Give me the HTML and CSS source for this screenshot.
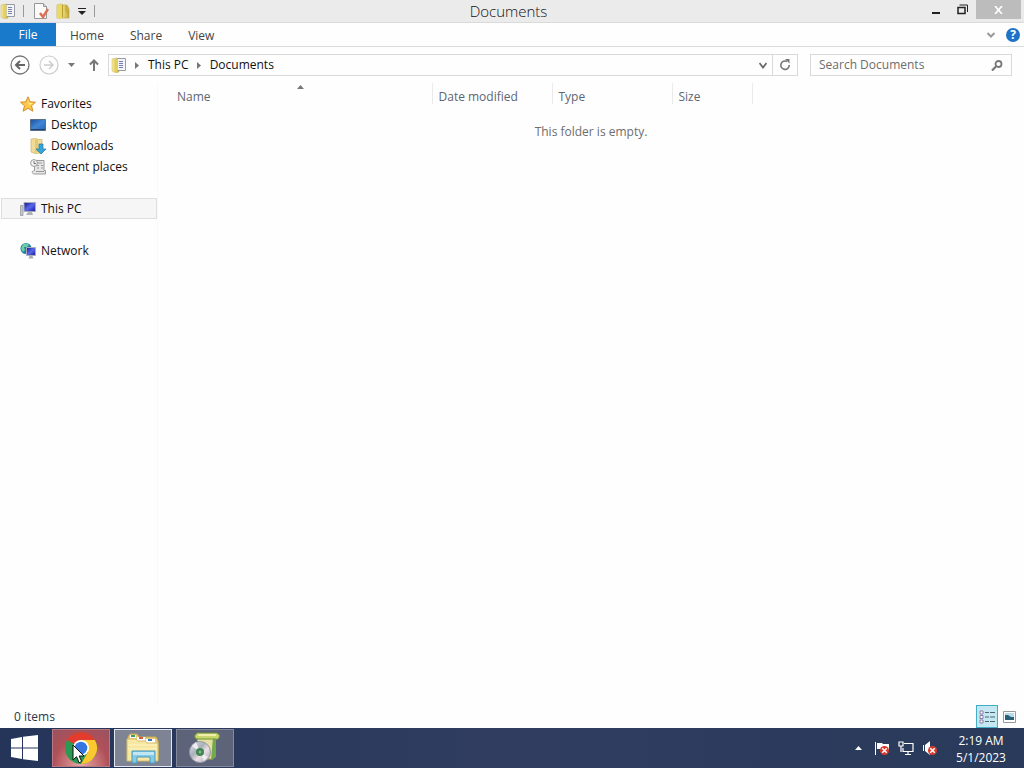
FILE: index.html
```html
<!DOCTYPE html>
<html lang="en">
<head>
  <meta charset="UTF-8" />
  <title>Documents</title>
  <link rel="stylesheet" href="styles.css">
</head>
<body>
  <!-- shared icons -->
  <svg class="defs" aria-hidden="true">
    <defs>
      <linearGradient id="gold" x2="1"><stop offset="0" stop-color="#f4eaa0" /><stop offset=".6" stop-color="#e4d067" /><stop offset="1" stop-color="#bda640" /></linearGradient>
      <linearGradient id="screen" x2="1" y2="1"><stop offset="0" stop-color="#1b4f9e" /><stop offset=".5" stop-color="#3f86d4" /><stop offset="1" stop-color="#2a64b4" /></linearGradient>
      <linearGradient id="monitor" x2="1" y2="1"><stop offset="0" stop-color="#11128c" /><stop offset=".5" stop-color="#5b68e8" /><stop offset="1" stop-color="#1517a0" /></linearGradient>
      <linearGradient id="disc" x2="1" y2="1"><stop offset="0" stop-color="#e8e8ee" /><stop offset=".4" stop-color="#a9b0b8" /><stop offset=".6" stop-color="#ecdfe6" /><stop offset="1" stop-color="#a2a6b0" /></linearGradient>
      <symbol id="docs" viewBox="0 0 16 16">
        <path d="M1 2l5-1 2 1v13l-3 1-4-2z" fill="url(#gold)" stroke="#c9b65a" stroke-width=".5" />
        <path d="M6 1.500h8.500v12H6z" fill="#f3f4f7" stroke="#9b9ca3" />
        <path d="M8 4.500h4M8 6.500h4M8 8.500h4M8 10.500h4" stroke="#7581b3" />
        <path d="M3.500 2.500l3-1v13l-3 1z" fill="#e2cf5e" />
      </symbol>
      <symbol id="badge" viewBox="0 0 8 8">
        <circle cx="4" cy="4" r="4" fill="#d83a2c" />
        <path d="M2 2l4 4M6 2L2 6" stroke="#fff" stroke-width="1.300" />
      </symbol>
    </defs>
  </svg>

  <div class="window">
    <header class="titlebar">
      <div class="quick-access">
        <svg width="16" height="16"><use href="#docs" /></svg>
        <span class="divider"></span>
        <button class="tool" aria-label="Properties">
          <svg width="16" height="16" viewBox="0 0 16 16"><path d="M1.500.5h9l3 3v12h-12z" fill="#fafafa" stroke="#96979b" /><path d="M10.500.5v3h3" fill="#ddd" stroke="#96979b" /><path d="M7 10l3 4 5-8" fill="none" stroke="#dc7155" stroke-width="2.500" /></svg>
        </button>
        <button class="tool" aria-label="New folder">
          <svg width="16" height="16" viewBox="0 0 16 16"><path d="M2 2l4-1 2 1h4l2 4v9H2z" fill="url(#gold)" stroke="#c2aa40" stroke-width=".7" /><path d="M2 2l4-1 1 1v12l-2 2-3-1z" fill="#e9d969" /><path d="M7.500 2v12M11 3v5l3 2" stroke="#b79e32" fill="none" /></svg>
        </button>
        <button class="tool small" aria-label="Customize Quick Access Toolbar">
          <svg width="8" height="7" viewBox="0 0 8 7"><path d="M0 .5h8" stroke="#222" /><path d="M0 3h8L4 7z" fill="#222" /></svg>
        </button>
        <span class="divider"></span>
      </div>
      <h1 class="title">Documents</h1>
      <div class="window-buttons">
        <button aria-label="Minimize"><svg width="8" height="10" viewBox="0 0 8 10"><path d="M0 7h8v2H0z" fill="#222" /></svg></button>
        <button aria-label="Restore"><svg width="11" height="11" viewBox="0 0 11 11"><path d="M1 3.500h7v6H1z" fill="none" stroke="#222" stroke-width="1.500" /><path d="M2.500 1h8v7" fill="none" stroke="#222" /></svg></button>
        <button class="close" aria-label="Close"><svg width="9" height="8" viewBox="0 0 9 8"><path d="M1 0l7 8M8 0L1 8" stroke="#fff" stroke-width="1.700" /></svg></button>
      </div>
    </header>

    <nav class="ribbon">
      <button class="tab file">File</button>
      <button class="tab">Home</button>
      <button class="tab">Share</button>
      <button class="tab">View</button>
      <div class="ribbon-end">
        <button class="tool" aria-label="Expand the Ribbon"><svg width="8" height="6" viewBox="0 0 8 6"><path d="M.5 1L4 4.500 7.500 1" fill="none" stroke="#999" stroke-width="2" /></svg></button>
        <button class="tool help" aria-label="Help">?</button>
      </div>
    </nav>

    <div class="navbar">
      <div class="history">
        <button class="tool" aria-label="Back"><svg width="20" height="20" viewBox="0 0 20 20"><circle cx="10" cy="10" r="9" fill="none" stroke="#777" stroke-width="1.300" /><path d="M15 10H6M10 6l-4 4 4 4" fill="none" stroke="#666" stroke-width="2" /></svg></button>
        <button class="tool" aria-label="Forward"><svg width="20" height="20" viewBox="0 0 20 20"><circle cx="10" cy="10" r="9" fill="none" stroke="#ccc" stroke-width="1.200" /><path d="M5 10h9M10 6l4 4-4 4" fill="none" stroke="#ccc" stroke-width="1.500" /></svg></button>
        <button class="tool" aria-label="Recent locations"><svg width="7" height="4" viewBox="0 0 7 4"><path d="M0 0h7L3.500 4z" fill="#777" /></svg></button>
        <button class="tool up" aria-label="Up"><svg width="10" height="12" viewBox="0 0 10 12"><path d="M5 12V2M1 5.500l4-4 4 4" fill="none" stroke="#777" stroke-width="2" /></svg></button>
      </div>
      <div class="address">
        <svg width="16" height="16"><use href="#docs" /></svg>
        <svg class="crumb-arrow" width="4" height="7" viewBox="0 0 4 7"><path d="M0 0l4 3.500L0 7z" fill="#777" /></svg>
        <a class="crumb" href="#">This PC</a>
        <svg class="crumb-arrow" width="4" height="7" viewBox="0 0 4 7"><path d="M0 0l4 3.500L0 7z" fill="#777" /></svg>
        <a class="crumb" href="#">Documents</a>
        <button class="tool address-menu" aria-label="Previous locations"><svg width="8" height="7" viewBox="0 0 8 7"><path d="M.5 1L4 5.500 7.500 1" fill="none" stroke="#666" stroke-width="1.700" /></svg></button>
        <button class="tool refresh" aria-label="Refresh"><svg width="12" height="12" viewBox="0 0 12 12"><path d="M8 2.500A4.200 4.200 0 1 0 10.200 6" fill="none" stroke="#777" stroke-width="1.600" /><path d="M6 0h4.500v4.500z" fill="#777" /></svg></button>
      </div>
      <label class="search">
        <input type="search" placeholder="Search Documents" aria-label="Search Documents">
        <svg width="12" height="11" viewBox="0 0 12 11"><circle cx="7.500" cy="4" r="3" fill="none" stroke="#777" stroke-width="1.800" /><path d="M5 6.500L1 10.500" stroke="#777" stroke-width="2.200" /></svg>
      </label>
    </div>

    <div class="content">
      <aside class="sidebar">
        <a class="place" href="#">
          <svg width="16" height="16" viewBox="0 0 16 16"><path d="M8 .8l2.200 5 5.300.4-4 3.600 1.400 5.400L8 12.300l-4.900 2.900 1.400-5.400-4-3.600 5.300-.4z" fill="#fbc849" stroke="#d88c2d" /><path d="M8 3l1.300 4H13L9 9z" fill="#fff0a0" /></svg>
          Favorites
        </a>
        <a class="place child" href="#">
          <svg width="16" height="16" viewBox="0 0 16 16"><path d="M.5 2.500h15v11H.5z" fill="url(#screen)" stroke="#556f8c" /><path d="M1 12.500h14" stroke="#20426e" /></svg>
          Desktop
        </a>
        <a class="place child" href="#">
          <svg width="16" height="16" viewBox="0 0 16 16"><path d="M1 1l5-.5 2 1h4V15l-7 .5L1 14z" fill="#f0dc96" stroke="#cbb365" stroke-width=".7" /><path d="M5 2l3-.5V14l-3 1z" fill="#e2c976" /><path d="M9 6h4v5h3l-5 5-5-5h3z" fill="#35a5d9" stroke="#2478a5" stroke-width=".7" /></svg>
          Downloads
        </a>
        <a class="place child" href="#">
          <svg width="16" height="16" viewBox="0 0 16 16"><path d="M5 1.500h9v10h1.500v3.500h-11c-3 0-3-3.500 0-3.500V1.500z" fill="#e6e6e6" stroke="#999" /><path d="M8 4h4M7 6.500h2M11 6.500h2M7 9h2M11 9h2M6 12.500h8" stroke="#999" /><circle cx="4" cy="4" r="3.400" fill="#f5f5f5" stroke="#999" /><path d="M4 2v2.500h2" fill="none" stroke="#777" /></svg>
          Recent places
        </a>
        <a class="place group selected" href="#">
          <svg width="16" height="16" viewBox="0 0 16 16"><path d="M.5 4.500h2.500v10H.5z" fill="#c4c7ca" stroke="#8c9298" stroke-width=".7" /><path d="M4 1.500h11.500v9H4z" fill="url(#monitor)" stroke="#a8adb8" /><path d="M8 11h4l1 3H6z" fill="#adb2ba" /></svg>
          This PC
        </a>
        <a class="place group" href="#">
          <svg width="16" height="16" viewBox="0 0 16 16"><circle cx="6" cy="5.500" r="5.500" fill="#1d7fa8" /><path d="M2 3c2-3 5-3 7-1L7 4 4 4 5 7 3 9C1 7 1 5 2 3z" fill="#6ccfa0" /><path d="M6.500 4.500h9v8h-9z" fill="url(#monitor)" stroke="#a8adb8" /><path d="M9.500 13h3l1 2.500h-5z" fill="#a5abb4" /></svg>
          Network
        </a>
      </aside>

      <main class="files">
        <table class="columns">
          <thead>
            <tr>
              <th class="name" aria-sort="ascending">Name<svg class="sort" width="7" height="4" viewBox="0 0 7 4"><path d="M0 4l3.500-4L7 4z" fill="#777" /></svg></th>
              <th class="date">Date modified</th>
              <th class="type">Type</th>
              <th class="size">Size</th>
            </tr>
          </thead>
        </table>
        <p class="empty">This folder is empty.</p>
      </main>
    </div>

    <footer class="status">
      <span>0 items</span>
      <div class="views">
        <button class="view active" aria-label="Details"><svg width="16" height="14" viewBox="0 0 16 14"><path d="M1 1h3v3H1zM1 5.500h3v3H1zM1 10h3v3H1z" fill="#fff" stroke="#8a7da8" /><path d="M6 2.500h4M11 2.500h5M6 7h4M11 7h5M6 11.500h4M11 11.500h5" stroke="#4d6471" /></svg></button>
        <button class="view" aria-label="Large icons"><svg width="13" height="12" viewBox="0 0 13 12"><path d="M.5.5h12v11H.5z" fill="#fff" stroke="#999" /><path d="M2 2h9v7H2z" fill="#b9dbea" /><path d="M2 4l3 0 3 2h3v3H2z" fill="#286078" /></svg></button>
      </div>
    </footer>
  </div>

  <footer class="taskbar">
    <button class="start" aria-label="Start"><svg width="27" height="26" viewBox="0 0 27 26"><path d="M0 4l11-2v10.500H0zM12 1.800L27 0v12.500H12zM0 13.500h11V24L0 22zM12 13.500h15V26l-15-1.800z" fill="#fff" /></svg></button>
    <button class="task chrome" aria-label="Google Chrome">
      <svg width="34" height="34" viewBox="0 0 34 34"><circle cx="17" cy="17" r="16" fill="#2b9950" /><path d="M17 17L3.140 9A16 16 0 0 1 30.860 9z" fill="#e33b2e" /><path d="M17 9h13.860A16 16 0 0 1 17 33l7-12z" fill="#fbc92f" /><circle cx="17" cy="17" r="8" fill="#fff" /><circle cx="17" cy="17" r="6.300" fill="#3776e0" /></svg>
      <svg class="cursor" width="13" height="20" viewBox="0 0 13 20"><path d="M1 1v15l3.500-3.300 2.600 6 2.600-1.200L7.200 12H12z" fill="#fff" stroke="#111" /></svg>
    </button>
    <button class="task current" aria-label="File Explorer">
      <svg width="34" height="32" viewBox="0 0 34 32"><path d="M2 5l2-3h7l2 3h17l2 4v19H2z" fill="#e7cd75" stroke="#c7aa52" /><path d="M4 3h6v3H4zM11 5h8v4h-8zM20 7h9v4h-9z" fill="#fff" /><path d="M5 3h4v2H5z" fill="#3f9b5c" /><path d="M13 5h4v2h-4z" fill="#d9583e" /><path d="M22 7h4v2h-4z" fill="#3977c6" /><path d="M1 7h9l2 2h7l2 2h11v18H1z" fill="#f6e7a1" stroke="#d4bd68" /><path d="M2 13h29M2 17h29" stroke="#fff4c4" /><path d="M6 31V19h23v12h-5v-6H11v6z" fill="#88c9e5" stroke="#4d9abd" /><path d="M7 20h21v3H7z" fill="#c1e7f4" /></svg>
    </button>
    <button class="task" aria-label="Installer">
      <svg width="32" height="32" viewBox="0 0 32 32"><path d="M8 6l18-1-2 22H12z" fill="#e6dfa0" stroke="#a9a95a" /><path d="M24 5l3 1v19l-5 3z" fill="#74a84c" /><path d="M6 3q2-3 5-2h17q4 2 2 5-1 2-4 1H9Q5 7 6 3z" fill="#c8d66b" stroke="#6c9438" /><path d="M9 3h18" stroke="#f1edac" stroke-width="2" /><circle cx="11" cy="20" r="10.500" fill="url(#disc)" stroke="#969aa5" /><path d="M11 20L3 14l4-4zM11 20l8 5-4 4z" fill="#f1edf2" /><circle cx="11" cy="20" r="4" fill="#3e8550" /><circle cx="11" cy="20" r="1.500" fill="#84b691" /></svg>
    </button>
    <div class="tray">
      <button class="tray-icon" aria-label="Show hidden icons"><svg width="7" height="4" viewBox="0 0 7 4"><path d="M0 4l3.500-4L7 4z" fill="#fff" /></svg></button>
      <button class="tray-icon" aria-label="Action Center"><svg width="16" height="16" viewBox="0 0 16 16"><path d="M1.500 2v13" stroke="#fff" /><path d="M3 3h5l1 1h6v6H8L7 9H3z" fill="#fff" /><use href="#badge" x="6" y="6" width="9" height="9" /></svg></button>
      <button class="tray-icon" aria-label="Network"><svg width="16" height="16" viewBox="0 0 16 16"><path d="M6 3.500h9v8H5V8M10 12v2M7 14.500h6" fill="none" stroke="#fff" stroke-width="1.200" /><path d="M1 2h4v4H1zM3 6v6" fill="none" stroke="#fff" stroke-width="1.200" /></svg></button>
      <button class="tray-icon" aria-label="Volume muted"><svg width="16" height="16" viewBox="0 0 16 16"><path d="M1.500 5v6" stroke="#fff" /><path d="M3 5l5-4v14l-5-4z" fill="#fff" /><use href="#badge" x="6" y="6" width="9" height="9" /></svg></button>
      <div class="clock"><time>2:19 AM</time><time>5/1/2023</time></div>
    </div>
  </footer>
</body>
</html>
```

FILE: styles.css
```css
* {
  box-sizing: border-box;
}

body {
  margin: 0;
  min-height: 100vh;
  display: flex;
  flex-direction: column;
  font-family: "Open Sans", "Noto Sans", sans-serif;
  font-size: 12px;
  line-height: 16px;
  color: #111;
  background: #fefefe;
}

button {
  display: flex;
  align-items: center;
  justify-content: center;
  padding: 0;
  border: none;
  background: none;
  font: inherit;
  color: inherit;
}

a {
  color: inherit;
  text-decoration: none;
}

svg {
  flex: none;
}

.defs {
  position: absolute;
  width: 0;
  height: 0;
}

.window {
  flex: 1;
  display: flex;
  flex-direction: column;
}

/* title bar */
.titlebar {
  display: grid;
  grid-template-columns: 1fr auto 1fr;
  height: 23px;
  padding-right: 3px;
  background: #ebebeb;
  border-bottom: 1px solid #dadada;
}

.quick-access {
  display: flex;
  align-items: center;
  gap: 6px;
}

.divider {
  width: 1px;
  height: 12px;
  margin: 0 3px 0 1px;
  background: #999;
}

.tool.small {
  margin: 0 1px;
}

.title {
  margin: 0;
  padding-right: 4px;
  font-size: 15px;
  font-weight: 300;
  line-height: 22px;
  color: #111;
}

.window-buttons {
  display: flex;
  justify-content: flex-end;
}

.window-buttons button {
  width: 27px;
  height: 19px;
}

.window-buttons .close {
  width: 45px;
  background: #bcbcbc;
}

/* ribbon */
.ribbon {
  display: flex;
  height: 24px;
  border-bottom: 1px solid #dadbdc;
  color: #444;
}

.tab {
  padding: 2px 13px 0;
}

.tab.file {
  width: 56px;
  margin-right: 1px;
  padding-top: 0;
  color: #fff;
  background: #1979ca;
}

.ribbon-end {
  display: flex;
  align-items: center;
  gap: 11px;
  margin-left: auto;
  padding-right: 4px;
}

.help {
  width: 14px;
  height: 14px;
  border-radius: 50%;
  color: #fff;
  font-weight: bold;
  background: #1e72c8;
}

/* navigation */
.navbar {
  display: flex;
  align-items: center;
  height: 36px;
  padding: 0 12px 0 10px;
}

.history {
  display: flex;
  align-items: center;
  gap: 9px;
  width: 98px;
}

.up {
  margin-left: 5px;
}

.address {
  flex: 1;
  display: flex;
  align-items: center;
  height: 22px;
  margin-right: 12px;
  padding-left: 2px;
  border: 1px solid #d9d9d9;
}

.crumb-arrow {
  margin: 0 9px 0 8px;
}

.address-menu {
  width: 18px;
  margin-left: auto;
}

.refresh {
  width: 25px;
  height: 20px;
  border-left: 1px solid #d9d9d9;
}

.search {
  display: flex;
  align-items: center;
  width: 202px;
  height: 22px;
  padding: 0 8px;
  border: 1px solid #d9d9d9;
}

.search input {
  flex: 1;
  min-width: 0;
  padding: 0;
  border: none;
  outline: none;
  background: none;
  font: inherit;
}

.search input::placeholder {
  color: #6d6d6d;
}

/* content */
.content {
  flex: 1;
  display: flex;
}

.sidebar {
  width: 158px;
  padding: 10px 0 0 1px;
  border-right: 1px solid #f9f9f9;
}

.place {
  display: flex;
  align-items: center;
  gap: 5px;
  height: 21px;
  padding-left: 18px;
  border: 1px solid transparent;
}

.place.child {
  padding-left: 28px;
}

.place.group {
  margin-top: 21px;
}

.place.selected {
  background: #f6f6f6;
  border-color: #dedede;
}

.files {
  flex: 1;
  padding-left: 13px;
}

.columns {
  border-collapse: collapse;
  table-layout: fixed;
  width: 581px;
  color: #5d6673;
}

.columns th {
  width: 120px;
  height: 21px;
  padding: 6px 6px 0;
  border-right: 1px solid #eaeaea;
  font-weight: normal;
  line-height: 15px;
  text-align: left;
}

.columns .name {
  position: relative;
  width: 261px;
}

.columns .size {
  width: 80px;
}

.sort {
  position: absolute;
  top: 2px;
  left: calc(50% - 4px);
}

.empty {
  margin: 20px 13px 0 0;
  color: #6d6d6d;
  text-align: center;
}

/* status bar */
.status {
  display: flex;
  align-items: center;
  justify-content: space-between;
  height: 23px;
  padding: 0 4px 0 14px;
  color: #26384d;
}

.views {
  display: flex;
}

.view {
  width: 22px;
  height: 23px;
}

.view.active {
  border: 1px solid #43adc8;
  background: #c4e8f2;
}

/* taskbar */
.taskbar {
  display: flex;
  align-items: center;
  gap: 4px;
  height: 40px;
  color: #fff;
  background: linear-gradient(90deg, #25355a, #303d60 50%, #293a5a);
}

.start {
  width: 48px;
  height: 40px;
}

.task {
  position: relative;
  width: 58px;
  height: 38px;
  border: 1px solid #838999;
  background: #5d6479;
}

.task.current {
  border-color: #e4e7eb;
  background: #7e8493;
}

.task.chrome {
  border-color: #b67982;
  background: radial-gradient(circle at 50% 100%, #e8a8a3, #b05059 60%, #995260);
}

.cursor {
  position: absolute;
  top: 14px;
  left: 19px;
}

.tray {
  display: flex;
  align-items: center;
  gap: 8px;
  margin-left: auto;
  padding-right: 17px;
}

.tray-icon {
  min-width: 16px;
  height: 24px;
}

.clock {
  display: flex;
  flex-direction: column;
  width: 52px;
  margin-left: 9px;
  padding-top: 2px;
  line-height: 17px;
  text-align: center;
}
```
